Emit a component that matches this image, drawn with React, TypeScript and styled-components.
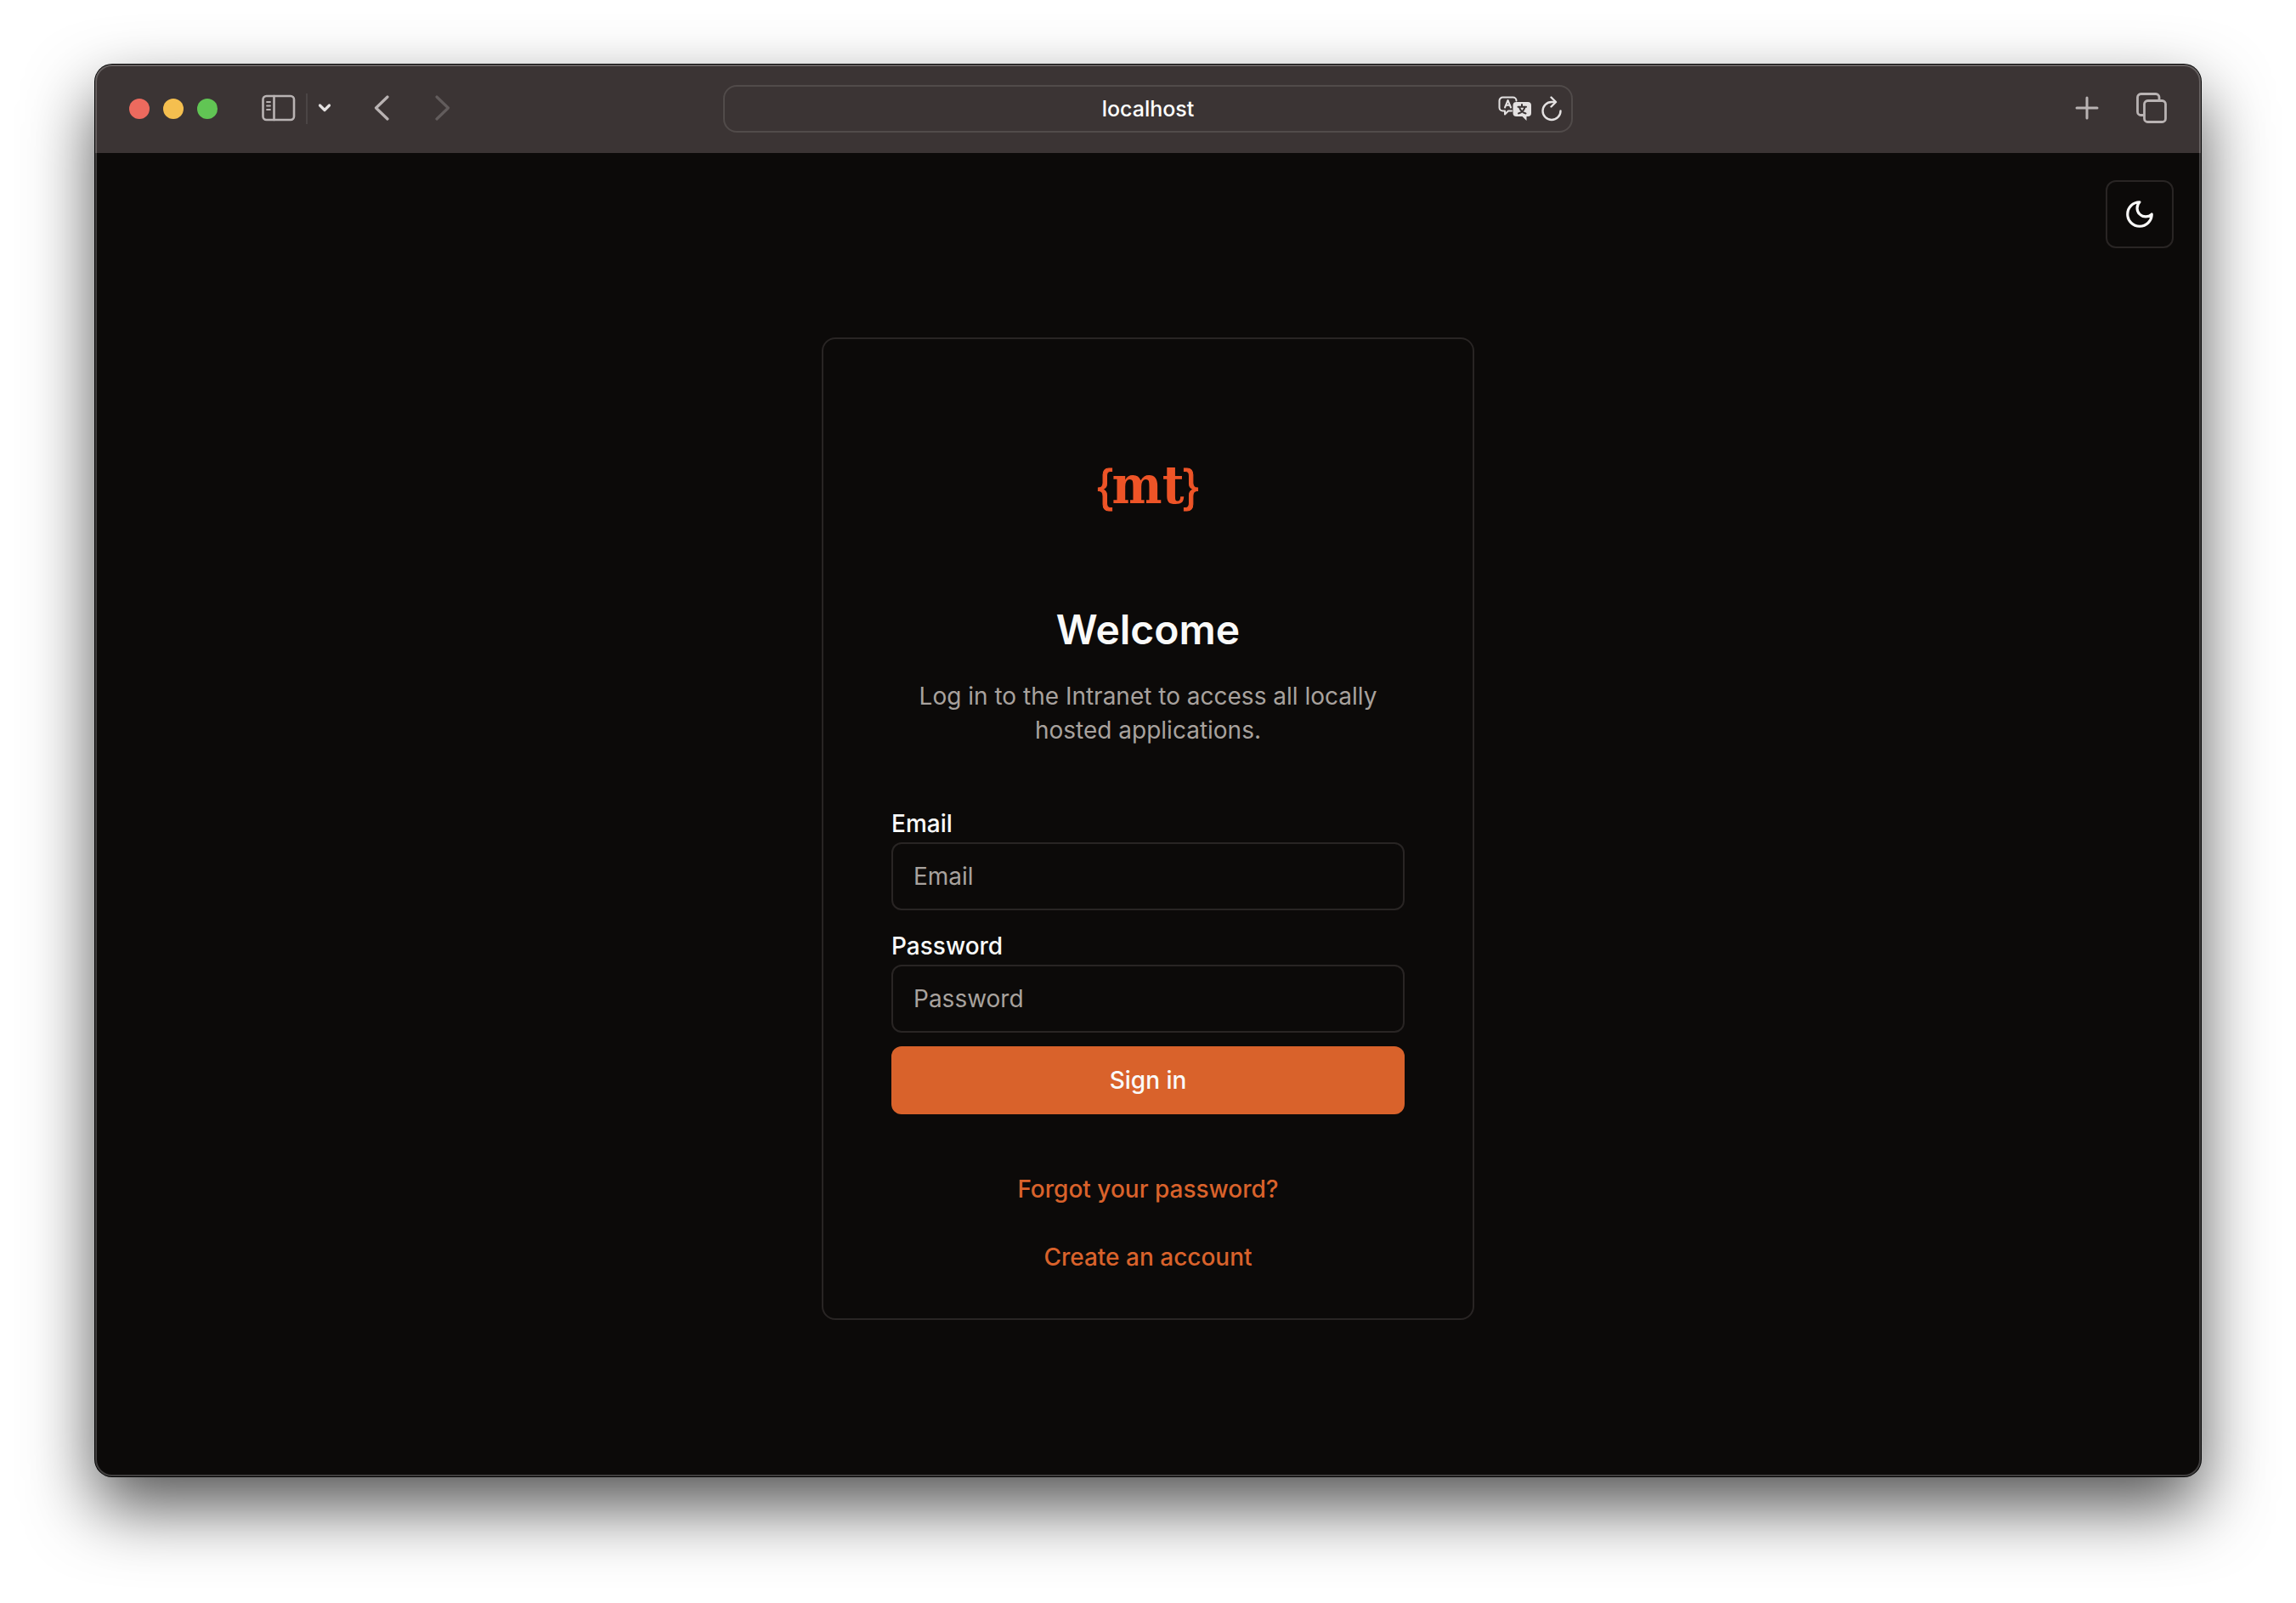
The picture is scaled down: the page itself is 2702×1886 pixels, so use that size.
import React from "react";
import styled, { createGlobalStyle } from "styled-components";

const GlobalStyle = createGlobalStyle`
  *, *::before, *::after { box-sizing: border-box; }
  body {
    margin: 0;
    background: #ffffff;
    font-family: Inter, "Liberation Sans", sans-serif;
    font-size: 28px;
    line-height: 40px;
    color: #fafaf9;
  }
  button, input { font: inherit; color: inherit; }
`;

const Desktop = styled.div`
  min-height: 100vh;
  padding: 76px 112px 149px;
  display: flex;
  overflow: hidden;
`;

const Window = styled.div`
  flex: 1;
  display: flex;
  flex-direction: column;
  border-radius: 20px;
  background: #0c0a09;
  box-shadow: 0 0 0 1px #000000, 0 36px 80px rgba(0, 0, 0, 0.67);
  position: relative;

  &::after {
    content: "";
    position: absolute;
    inset: 0;
    border-radius: 20px;
    border: 2px solid rgba(255, 255, 255, 0.22);
    pointer-events: none;
  }
`;

const Toolbar = styled.header`
  height: 104px;
  padding: 0 36px;
  display: grid;
  grid-template-columns: 1fr minmax(0, 1000px) 1fr;
  align-items: center;
  border-radius: 20px 20px 0 0;
  background: #3b3434;
`;

const Lights = styled.div`
  display: flex;
  gap: 16px;
  margin: 0 48px 0 4px;
`;

const Light = styled.button<{ $color: string }>`
  width: 24px;
  height: 24px;
  padding: 0;
  border: 0;
  border-radius: 50%;
  background: ${(p) => p.$color};
`;

const ToolButton = styled.button<{ $faded?: boolean; $bright?: boolean }>`
  display: flex;
  align-items: center;
  justify-content: center;
  padding: 0 4px;
  height: 48px;
  border: 0;
  background: none;
  color: ${(p) => (p.$bright ? "#e4e1e1" : p.$faded ? "#625c5c" : "#b9b3b3")};
  svg { display: block; }
`;

const ToolGroup = styled.div<{ $end?: boolean }>`
  display: flex;
  align-items: center;
  justify-content: ${(p) => (p.$end ? "flex-end" : "flex-start")};

  ${ToolButton} {
    padding-bottom: 2px;
  }
`;

const Separator = styled.span`
  width: 2px;
  height: 36px;
  margin: 0 8px;
  background: #4b4545;
`;

const Spacer = styled.span<{ $size: number }>`
  width: ${(p) => p.$size}px;
`;

const AddressBar = styled.div`
  height: 56px;
  padding: 0 6px;
  display: grid;
  grid-template-columns: 88px 1fr 88px;
  align-items: center;
  border: 2px solid #514b4a;
  border-radius: 16px;
`;

const AddressInput = styled.input`
  grid-column: 2;
  width: 100%;
  padding: 0;
  border: 0;
  outline: 0;
  background: none;
  color: #ffffff;
  font-size: 25px;
  font-weight: 500;
  text-align: center;
`;

const AddressActions = styled.div`
  display: flex;
  align-items: center;
  justify-content: flex-end;
  gap: 2px;
`;

const Page = styled.div`
  flex: 1;
  display: flex;
  flex-direction: column;
`;

const PageHeader = styled.div`
  display: flex;
  justify-content: flex-end;
  padding: 32px 32px 0;
`;

const ThemeToggle = styled.button`
  width: 80px;
  height: 80px;
  padding: 0;
  display: flex;
  align-items: center;
  justify-content: center;
  border: 2px solid #292524;
  border-radius: 12px;
  background: #0c0a09;
`;

const Main = styled.main`
  flex: 1;
  display: flex;
  align-items: flex-start;
  justify-content: center;
  padding: 105px 32px 80px;
`;

const Card = styled.section`
  width: 768px;
  padding: 80px 80px 32px;
  display: flex;
  flex-direction: column;
  border: 2px solid #292524;
  border-radius: 16px;
`;

const Logo = styled.div`
  height: 190px;
  padding-bottom: 6px;
  display: flex;
  align-items: center;
  justify-content: center;
  color: #ee5427;
  line-height: 64px;
`;

const LogoBrace = styled.span`
  margin: 0 -1px;
  font-family: "Liberation Sans", sans-serif;
  font-size: 54px;
  -webkit-text-stroke: 1px currentColor;
`;

const LogoName = styled.span`
  font-family: "DejaVu Serif Condensed", "DejaVu Serif", serif;
  font-size: 62px;
  font-weight: 700;
`;

const Title = styled.h1`
  margin: 40px 0 0;
  font-size: 48px;
  line-height: 64px;
  font-weight: 600;
  text-align: center;
`;

const Description = styled.p`
  margin: 26px 0 76px;
  color: #a8a29e;
  text-align: center;
`;

const Form = styled.form`
  display: flex;
  flex-direction: column;
  gap: 16px;
`;

const Fields = styled.div`
  display: flex;
  flex-direction: column;
  gap: 28px;
`;

const Field = styled.div`
  display: flex;
  flex-direction: column;
  gap: 8px;
`;

const Label = styled.label`
  line-height: 28px;
  font-weight: 500;
`;

const TextInput = styled.input`
  width: 100%;
  height: 80px;
  padding: 0 24px;
  border: 2px solid #292524;
  border-radius: 12px;
  background: #0c0a09;
  &::placeholder { color: #a8a29e; opacity: 1; }
`;

const SubmitButton = styled.button`
  height: 80px;
  border: 0;
  border-radius: 12px;
  background: #d9622b;
  font-weight: 500;
`;

const Links = styled.nav`
  margin-top: 48px;
  display: flex;
  flex-direction: column;
  align-items: center;
`;

const TextLink = styled.a`
  line-height: 80px;
  color: #d9622b;
  font-weight: 500;
  text-decoration: none;
`;

const stroke = {
  fill: "none",
  stroke: "currentColor",
  strokeLinecap: "round" as const,
  strokeLinejoin: "round" as const,
};

const SidebarIcon = () => (
  <svg width="40" height="32" viewBox="0 0 40 32" {...stroke} strokeWidth="2.6">
    <rect x="1.5" y="2" width="36.5" height="28" rx="4" />
    <path d="M14.5 2v28" />
    <path d="M6 9h4M6 13.5h4M6 18h4" strokeWidth="1.8" />
  </svg>
);

const MenuChevronIcon = () => (
  <svg width="16" height="12" viewBox="0 0 16 12" {...stroke} strokeWidth="3.2">
    <path d="M2.5 3L8 8.5L13.5 3" />
  </svg>
);

const ChevronIcon = ({ forward }: { forward?: boolean }) => (
  <svg width="18" height="30" viewBox="0 0 18 30" {...stroke} strokeWidth="3.2">
    <path d={forward ? "M2 2l13.5 13L2 28" : "M16 2L2.5 15L16 28"} />
  </svg>
);

const PlusIcon = () => (
  <svg width="28" height="28" viewBox="0 0 28 28" {...stroke} strokeWidth="3">
    <path d="M14 2v24M2 14h24" />
  </svg>
);

const TabsIcon = () => (
  <svg width="36" height="36" viewBox="0 0 36 36" {...stroke} strokeWidth="2.8">
    <rect x="9.5" y="9.5" width="25" height="25" rx="4" />
    <path d="M9 26.5H5.5a4 4 0 0 1-4-4V5.5a4 4 0 0 1 4-4h17.5a4 4 0 0 1 4 4V9" />
  </svg>
);

const TranslateIcon = () => (
  <svg width="40" height="30" viewBox="0 0 40 30" {...stroke} strokeWidth="2">
    <path d="M16 17.5H12l-4 4v-4H5.5a4 4 0 0 1-4-4V5.5a4 4 0 0 1 4-4h12a4 4 0 0 1 4 4" />
    <path d="M8 13.5L11.5 5L15 13.5M9.3 10.8h4.5" />
    <path
      d="M21.5 7h13.5a4 4 0 0 1 4 4v9a4 4 0 0 1-4 4h-1.5v5l-5-5h-7a4 4 0 0 1-4-4v-9a4 4 0 0 1 4-4z"
      fill="currentColor"
      stroke="none"
    />
    <path d="M28 10v2.5M23.5 12.8h9.5M31.5 13c-1 4-4 6.5-7.5 7.5M25 13c1 4 4 6.5 7.5 7.5" stroke="#3b3434" />
  </svg>
);

const ReloadIcon = () => (
  <svg width="26" height="30" viewBox="0 0 26 30" {...stroke} strokeWidth="2.4">
    <path d="M23.5 17.5A10.5 10.5 0 1 1 13 7h4" />
    <path d="M12.5 1.5L18 7L12.5 12.5" />
  </svg>
);

const MoonIcon = () => (
  <svg width="38" height="38" viewBox="0 0 24 24" {...stroke} strokeWidth="2">
    <path d="M12 3a6 6 0 0 0 9 9 9 9 0 1 1-9-9Z" />
  </svg>
);

export default function App() {
  return (
    <>
      <GlobalStyle />
      <Desktop>
        <Window>
          <Toolbar>
            <ToolGroup>
              <Lights>
                <Light $color="#ed6a5e" aria-label="Close" />
                <Light $color="#f5bf4f" aria-label="Minimize" />
                <Light $color="#61c554" aria-label="Zoom" />
              </Lights>
              <ToolButton aria-label="Show sidebar"><SidebarIcon /></ToolButton>
              <Separator />
              <ToolButton $bright aria-label="Tab groups"><MenuChevronIcon /></ToolButton>
              <Spacer $size={42} />
              <ToolButton aria-label="Back"><ChevronIcon /></ToolButton>
              <Spacer $size={46} />
              <ToolButton $faded aria-label="Forward"><ChevronIcon forward /></ToolButton>
            </ToolGroup>
            <AddressBar>
              <AddressInput aria-label="Address" defaultValue="localhost" />
              <AddressActions>
                <ToolButton $bright aria-label="Translate"><TranslateIcon /></ToolButton>
                <ToolButton $bright aria-label="Reload"><ReloadIcon /></ToolButton>
              </AddressActions>
            </AddressBar>
            <ToolGroup $end>
              <ToolButton aria-label="New tab"><PlusIcon /></ToolButton>
              <Spacer $size={36} />
              <ToolButton aria-label="Show tabs"><TabsIcon /></ToolButton>
            </ToolGroup>
          </Toolbar>
          <Page>
            <PageHeader>
              <ThemeToggle aria-label="Toggle theme"><MoonIcon /></ThemeToggle>
            </PageHeader>
            <Main>
              <Card>
                <Logo>
                  <LogoBrace>{"{"}</LogoBrace>
                  <LogoName>mt</LogoName>
                  <LogoBrace>{"}"}</LogoBrace>
                </Logo>
                <Title>Welcome</Title>
                <Description>Log in to the Intranet to access all locally hosted applications.</Description>
                <Form onSubmit={(e) => e.preventDefault()}>
                  <Fields>
                    <Field>
                      <Label htmlFor="email">Email</Label>
                      <TextInput id="email" type="email" placeholder="Email" />
                    </Field>
                    <Field>
                      <Label htmlFor="password">Password</Label>
                      <TextInput id="password" type="password" placeholder="Password" />
                    </Field>
                  </Fields>
                  <SubmitButton type="submit">Sign in</SubmitButton>
                </Form>
                <Links>
                  <TextLink href="#forgot">Forgot your password?</TextLink>
                  <TextLink href="#register">Create an account</TextLink>
                </Links>
              </Card>
            </Main>
          </Page>
        </Window>
      </Desktop>
    </>
  );
}
